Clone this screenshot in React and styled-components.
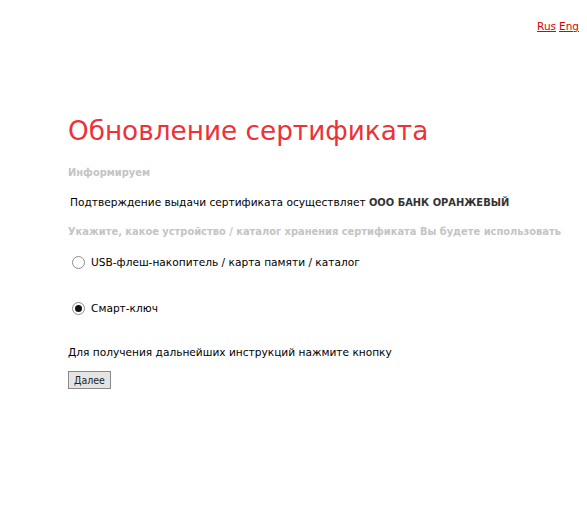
import React from 'react'
import styled, { createGlobalStyle } from 'styled-components'

const GlobalStyle = createGlobalStyle`
  html, body {
    margin: 0;
    padding: 0;
    background: #fff;
  }
  body {
    font-family: "DejaVu Sans", Verdana, sans-serif;
    font-size: 11px;
    color: #000;
  }
`

const Page = styled.div`
  width: 587px;
  min-height: 512px;
  box-sizing: border-box;
`

const LangBar = styled.div`
  display: flex;
  justify-content: flex-end;
  gap: 3px;
  padding: 20px 8px 0 0;
  height: 30px;
  box-sizing: border-box;
`

const LangLink = styled.a`
  color: #e00000;
  font-size: 10.5px;
  text-decoration: underline;
  cursor: pointer;
`

const Content = styled.div`
  padding: 84px 0 0 68px;
`

const Title = styled.h1`
  margin: 0;
  font-weight: normal;
  font-size: 26.3px;
  line-height: 34px;
  color: #ec3237;
`

const Caption = styled.div`
  margin-top: ${props => props.top || 0}px;
  font-weight: bold;
  font-size: 9.9px;
  line-height: 14px;
  color: #c4c4c4;
  white-space: nowrap;
`

const Text = styled.div`
  margin-top: ${props => props.top || 0}px;
  padding-left: ${props => props.indent || 0}px;
  font-size: 10.6px;
  line-height: 14px;
  white-space: nowrap;
`

const Strong = styled.b`
  font-family: "DejaVu Sans Condensed", "DejaVu Sans", sans-serif;
  font-size: 11px;
  color: #333;
`

const RadioList = styled.div`
  display: flex;
  flex-direction: column;
  gap: 32px;
  margin-top: 16px;
  padding-left: 4px;
`

const RadioRow = styled.label`
  display: flex;
  align-items: center;
  gap: 6px;
  font-size: 10.6px;
  line-height: 14px;
`

const Radio = styled.input`
  appearance: none;
  margin: 0;
  width: 13px;
  height: 13px;
  border: 1px solid #8d8d8d;
  border-radius: 50%;
  background: #fff;
  display: grid;
  place-items: center;
  box-sizing: border-box;

  &:checked::after {
    content: '';
    width: 7px;
    height: 7px;
    border-radius: 50%;
    background: #111;
  }
`

const Button = styled.button`
  margin-top: 12px;
  font-family: "DejaVu Sans Condensed", "DejaVu Sans", sans-serif;
  font-size: 10.5px;
  line-height: 14px;
  padding: 1px 5px;
  background: #e4e4e4;
  border: 1px solid #8a8a8a;
  border-radius: 0;
  color: #222;
`

export default function App() {
  return (
    <Page>
      <GlobalStyle />
      <LangBar>
        <LangLink>Rus</LangLink>
        <LangLink>Eng</LangLink>
      </LangBar>
      <Content>
        <Title>Обновление сертификата</Title>
        <Caption top={18}>Информируем</Caption>
        <Text top={15} indent={2}>
          Подтверждение выдачи сертификата осуществляет <Strong>ООО БАНК ОРАНЖЕВЫЙ</Strong>
        </Text>
        <Caption top={15}>Укажите, какое устройство / каталог хранения сертификата Вы будете использовать</Caption>
        <RadioList>
          <RadioRow>
            <Radio type="radio" name="device" />
            USB-флеш-накопитель / карта памяти / каталог
          </RadioRow>
          <RadioRow>
            <Radio type="radio" name="device" defaultChecked />
            Смарт-ключ
          </RadioRow>
        </RadioList>
        <Text top={30}>Для получения дальнейших инструкций нажмите кнопку</Text>
        <Button>Далее</Button>
      </Content>
    </Page>
  )
}
